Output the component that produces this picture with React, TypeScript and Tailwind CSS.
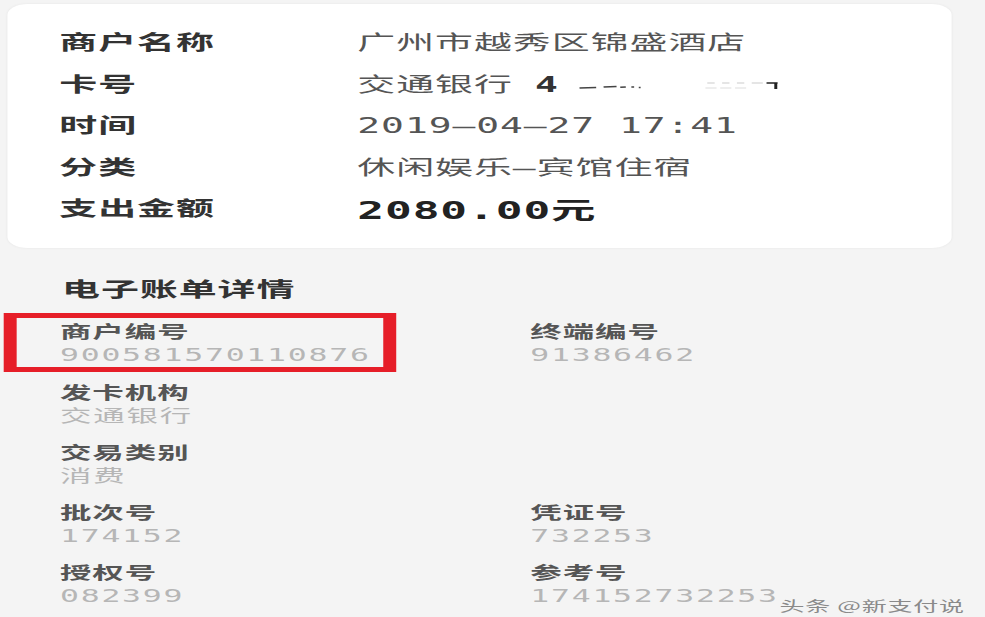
import React from 'react';

const topRows = [
  { label: '商户名称', value: '广州市越秀区锦盛酒店' },
  { label: '卡号', value: 'card' },
  { label: '时间', value: '2019–04–27 17:41' },
  { label: '分类', value: '休闲娱乐–宾馆住宿' },
  { label: '支出金额', value: 'amount' },
];

const details: { label: string; value: string; right?: { label: string; value: string }; marked?: boolean }[] = [
  { label: '商户编号', value: '900581570110876', right: { label: '终端编号', value: '91386462' }, marked: true },
  { label: '发卡机构', value: '交通银行' },
  { label: '交易类别', value: '消费' },
  { label: '批次号', value: '174152', right: { label: '凭证号', value: '732253' } },
  { label: '授权号', value: '082399', right: { label: '参考号', value: '174152732253' } },
];

// card number is partly wiped out in the screenshot
const MaskedNumber = () => (
  <svg width="126" height="20" viewBox="0 0 126 20" className="inline-block align-middle">
    <path d="M11 13 L20 12.5 M24 12 L31 11.5 M33 12.2 L36 12 M39 12 h1.5 M43 12.5 h1" stroke="#444" strokeWidth="1.6" fill="none" />
    <path d="M80 8 h4 M88 8 h4 M96 8 h4 M104 8 h6" stroke="#ccc" strokeWidth="1" fill="none" />
    <path d="M79 13 h6 M87 13 h6 M95 13 h6" stroke="#ddd" strokeWidth="1" fill="none" />
    <path d="M112 8 h6 M117 8 v6" stroke="#222" strokeWidth="1.6" fill="none" />
  </svg>
);

const Item = ({ label, value }: { label: string; value: string }) => (
  <div className="flex flex-col">
    <span className="text-[17px] leading-[23px] font-semibold text-[#555]">{label}</span>
    <span className="text-[17px] leading-[23px] tracking-[0.95px] text-[#b6b6b6]">{value}</span>
  </div>
);

export default function App() {
  return (
    <div className="w-full h-[617px] overflow-hidden bg-[#f4f4f4] font-['DejaVu_Sans_Mono','Noto_Sans_CJK_SC',monospace] tracking-[0.5px]">
      <div className="relative w-[532px] h-[617px] origin-top-left scale-x-[1.8515]">
        {/* summary card */}
        <div className="ml-[4px] mt-[4px] w-[510px] rounded-[11px] bg-white shadow-[0_0_2px_rgba(0,0,0,0.06)] pl-[28px] pt-[18.5px] pb-[17.5px]">
          {topRows.map((row) => (
            <div key={row.label} className="flex items-center h-[41.6px]">
              <span className="w-[161px] text-[20.5px] font-bold text-[#333]">{row.label}</span>
              {row.value === 'card' ? (
                <span className="text-[20.5px] text-[#555] flex items-center">
                  交通银行 <span className="font-bold text-[#333] ml-[12px]">4</span>
                  <MaskedNumber />
                </span>
              ) : row.value === 'amount' ? (
                <span className="text-[24px] font-bold text-[#222] mt-[3px]">2080.00元</span>
              ) : (
                <span className="text-[20.5px] text-[#555]">{row.value}</span>
              )}
            </div>
          ))}
        </div>

        <h2 className="mt-[28px] ml-[33.5px] text-[20.5px] leading-[28px] font-bold text-[#333]">电子账单详情</h2>

        <div className="mt-[17.5px] pl-[32.4px] grid grid-cols-[254px_1fr] gap-y-[14.2px]">
          {details.map((d) => (
            <React.Fragment key={d.label}>
              <div className="relative">
                {d.marked && (
                  <div className="absolute top-[-8px] left-[-30px] w-[212px] h-[59px] border-x-[7px] border-y-[5px] border-[#e61e28]" />
                )}
                <Item label={d.label} value={d.value} />
              </div>
              <div>{d.right && <Item label={d.right.label} value={d.right.value} />}</div>
            </React.Fragment>
          ))}
        </div>

        {/* watermark */}
        <div className="absolute left-[421px] top-[591px] text-[13.5px] tracking-[0.4px] text-[#8a8a8a] font-['Noto_Sans_CJK_SC',sans-serif]">
          头条 @新支付说
        </div>
      </div>
    </div>
  );
}
